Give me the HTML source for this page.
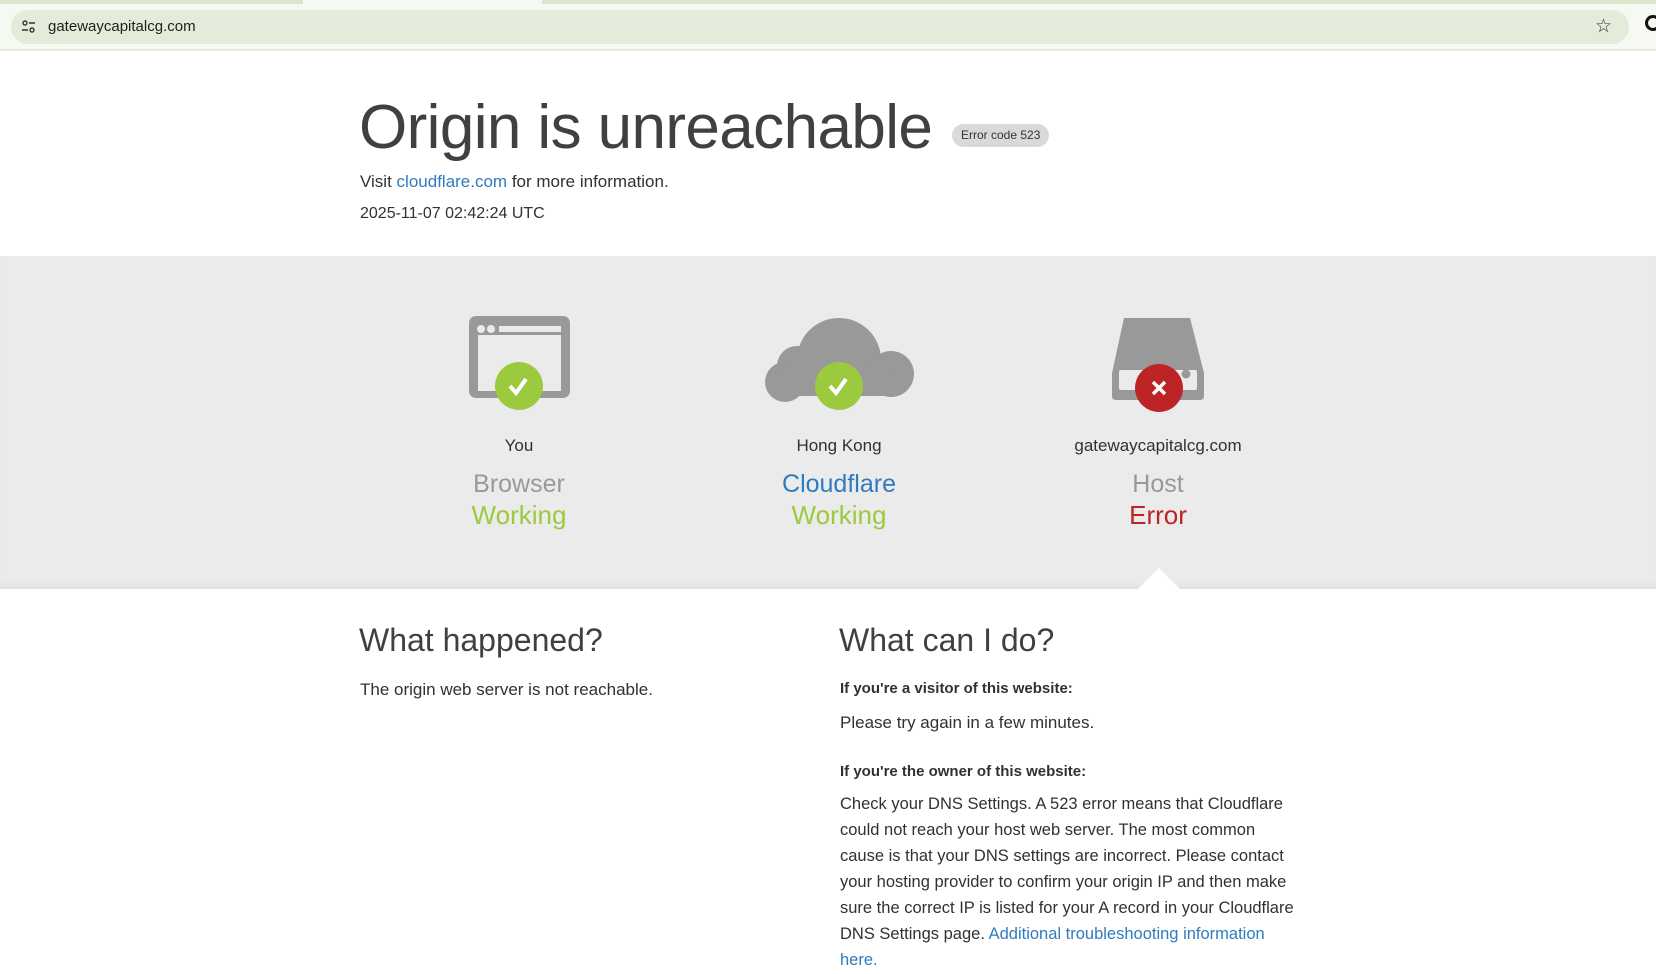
<!DOCTYPE html>
<html><head><meta charset="utf-8"><style>
*{margin:0;padding:0;box-sizing:border-box}
body{width:1656px;height:974px;overflow:hidden;background:#fff;font-family:"Liberation Sans",sans-serif;color:#313131;position:relative}
.top{position:absolute;left:0;top:0;width:1656px;height:51px;background:#f6f9f1;border-bottom:2px solid #e2e8da}
.tabs{position:absolute;top:0;height:4px;background:#d9e6cc}
.bar{position:absolute;left:11px;top:10px;width:1618px;height:34px;border-radius:17px;background:#e3ecda}
.bar .url{position:absolute;left:37px;top:8px;font-size:15px;color:#1f1f1f}
.a{position:absolute;white-space:nowrap}
.gray{position:absolute;left:0;top:256px;width:1656px;height:333px;background:#ebebeb;box-shadow:inset 0 -8px 8px -6px #ddd}
.lbl{position:absolute;width:300px;text-align:center}
p.t{font-size:17px;line-height:26px;color:#313131}
a{color:#2f7bbf;text-decoration:none}
</style></head><body>
<div class="top">
 <div class="tabs" style="left:0;width:303px"></div>
 <div class="tabs" style="left:542px;width:1114px"></div>
 <div class="bar">
  <svg style="position:absolute;left:10px;top:9px" width="15" height="15" viewBox="0 0 15 15" fill="none" stroke="#333" stroke-width="1.4"><circle cx="4" cy="4" r="2"/><path d="M8 4h6M1 11h6"/><circle cx="11" cy="11" r="2"/></svg>
  <div class="url">gatewaycapitalcg.com</div>
  <div style="position:absolute;left:1584px;top:5px;font-size:19px;color:#333">☆</div>
 </div>
 <div style="position:absolute;left:1645px;top:15px;width:16px;height:16px;border:3px solid #111;border-radius:50%"></div>
</div>

<div class="a" style="left:359px;top:92px;font-size:62px;color:#404040;letter-spacing:-0.6px">Origin is unreachable</div>
<div class="a" style="left:952px;top:124px;height:23px;padding:0 9px;border-radius:12px;background:#d9d9d9;font-size:12px;line-height:23px;color:#333">Error code 523</div>
<div class="a" style="left:360px;top:172px;font-size:17px">Visit <a>cloudflare.com</a> for more information.</div>
<div class="a" style="left:360px;top:205px;font-size:16px">2025-11-07 02:42:24 UTC</div>

<div class="gray"></div>
<svg class="a" style="left:469px;top:316px" width="101" height="100" viewBox="0 0 101 100">
 <rect x="0" y="0" width="101" height="82" rx="7" fill="#999"/>
 <rect x="9" y="19" width="83" height="56" fill="#ebebeb"/>
 <circle cx="12" cy="13" r="4" fill="#ebebeb"/><circle cx="22" cy="13" r="4" fill="#ebebeb"/>
 <rect x="30" y="10" width="62" height="6" fill="#ebebeb"/>
 <circle cx="50" cy="70" r="24" fill="#9bca3e"/>
 <path d="M41 70l6 7 10-14" stroke="#fff" stroke-width="4" fill="none"/>
</svg>
<svg class="a" style="left:763px;top:316px" width="152" height="100" viewBox="0 0 152 100">
 <g fill="#999"><circle cx="76" cy="44" r="42"/><circle cx="34" cy="50" r="20"/><circle cx="128" cy="58" r="23"/><circle cx="22" cy="66" r="20"/>
 <rect x="20" y="55" width="112" height="25" rx="4"/></g>
 <circle cx="76" cy="70" r="24" fill="#9bca3e"/>
 <path d="M67 70l6 7 10-14" stroke="#fff" stroke-width="4" fill="none"/>
</svg>
<svg class="a" style="left:1110px;top:316px" width="96" height="100" viewBox="0 0 96 100">
 <path d="M14 0h66l14 55v23q0 4-4 4H6q-4 0-4-4V55z" fill="#999" transform="translate(0,2)"/>
 <rect x="9" y="54" width="78" height="20" rx="2" fill="#ebebeb"/>
 <circle cx="76" cy="58" r="4.5" fill="#999"/>
 <circle cx="49" cy="72" r="24" fill="#bd2426"/>
 <path d="M43 66l12 12M55 66l-12 12" stroke="#fff" stroke-width="3.5"/>
</svg>

<div class="lbl" style="left:369px;top:436px;font-size:17px">You</div>
<div class="lbl" style="left:369px;top:470px;font-size:25px;color:#999;font-weight:300">Browser</div>
<div class="lbl" style="left:369px;top:500px;font-size:26px;color:#9bca3e">Working</div>
<div class="lbl" style="left:689px;top:436px;font-size:17px">Hong Kong</div>
<div class="lbl" style="left:689px;top:470px;font-size:25px;color:#2f7bbf;font-weight:300">Cloudflare</div>
<div class="lbl" style="left:689px;top:500px;font-size:26px;color:#9bca3e">Working</div>
<div class="lbl" style="left:1008px;top:436px;font-size:17px">gatewaycapitalcg.com</div>
<div class="lbl" style="left:1008px;top:470px;font-size:25px;color:#999;font-weight:300">Host</div>
<div class="lbl" style="left:1008px;top:500px;font-size:26px;color:#bd2426">Error</div>
<div class="a" style="left:1138px;top:568px;width:0;height:0;border-left:21px solid transparent;border-right:21px solid transparent;border-bottom:21px solid #fff"></div>

<div class="a" style="left:359px;top:622px;font-size:32px;color:#404040">What happened?</div>
<p class="t a" style="left:360px;top:677px">The origin web server is not reachable.</p>
<div class="a" style="left:839px;top:622px;font-size:32px;color:#404040">What can I do?</div>
<div class="a" style="left:840px;top:680px;font-size:15px;font-weight:bold">If you're a visitor of this website:</div>
<p class="t a" style="left:840px;top:710px">Please try again in a few minutes.</p>
<div class="a" style="left:840px;top:763px;font-size:15px;font-weight:bold">If you're the owner of this website:</div>
<p class="t a" style="left:840px;top:791px;font-size:16.5px">Check your DNS Settings. A 523 error means that Cloudflare<br>could not reach your host web server. The most common<br>cause is that your DNS settings are incorrect. Please contact<br>your hosting provider to confirm your origin IP and then make<br>sure the correct IP is listed for your A record in your Cloudflare<br>DNS Settings page. <a>Additional troubleshooting information<br>here.</a></p>
</body></html>
